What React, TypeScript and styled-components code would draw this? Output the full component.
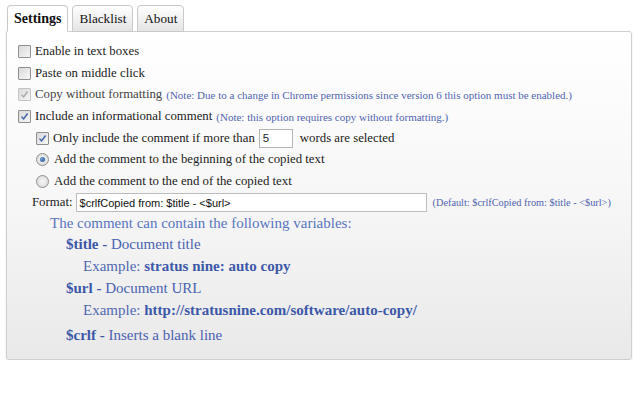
import styled, { createGlobalStyle } from "styled-components";

const GlobalStyle = createGlobalStyle`
  html, body {
    margin: 0;
    padding: 0;
    background: #ffffff;
  }
  body {
    font-family: "Liberation Serif", "Times New Roman", serif;
    color: #222;
  }
`;

const Page = styled.div`
  padding: 5px 8px 0 6px;
  width: 640px;
  box-sizing: border-box;
`;

const TabBar = styled.div`
  display: flex;
  gap: 4px;
  padding-left: 1px;
  position: relative;
  z-index: 2;
  margin-bottom: -1px;
`;

const Tab = styled.div<{ $active?: boolean }>`
  height: 25px;
  padding: 0 6px;
  display: flex;
  align-items: center;
  font-size: ${({ $active }) => ($active ? "14px" : "13.2px")};
  font-weight: ${({ $active }) => ($active ? "bold" : "normal")};
  color: #111;
  border: 1px solid #c9c9c9;
  border-bottom-color: ${({ $active }) => ($active ? "#fff" : "#c9c9c9")};
  border-radius: 4px 4px 0 0;
  background: ${({ $active }) =>
    $active ? "#fff" : "linear-gradient(#ffffff, #e4e4e4)"};
`;

const Panel = styled.div`
  border: 1px solid #cfcfcf;
  border-radius: 0 3px 3px 3px;
  background: linear-gradient(#ffffff 0%, #f7f7f7 50%, #e9e9e9 100%);
  box-shadow: 0 1px 2px rgba(0, 0, 0, 0.12);
  height: 329px;
  box-sizing: border-box;
  padding: 9px 0 0 11px;
`;

const Row = styled.div<{ $indent?: number }>`
  display: flex;
  align-items: center;
  height: 21.6px;
  font-size: 12.8px;
  padding-left: ${({ $indent }) => ($indent ?? 0) * 18}px;
  white-space: nowrap;
`;

const Box = styled.span<{ $faded?: boolean }>`
  width: 11px;
  height: 11px;
  border: 1px solid ${({ $faded }) => ($faded ? "#c4c4c4" : "#8f8f8f")};
  border-radius: 1px;
  background: linear-gradient(135deg, #d9d9d9, #f6f6f6);
  margin-right: 4px;
  display: flex;
  align-items: center;
  justify-content: center;
  flex-shrink: 0;
`;

const Radio = styled.span<{ $on?: boolean }>`
  width: 11px;
  height: 11px;
  border: 1px solid #8f8f8f;
  border-radius: 50%;
  background: radial-gradient(#f8f8f8, #d4d4d4);
  margin-right: 5px;
  display: flex;
  align-items: center;
  justify-content: center;
  flex-shrink: 0;
  &::after {
    content: "";
    display: ${({ $on }) => ($on ? "block" : "none")};
    width: 5px;
    height: 5px;
    border-radius: 50%;
    background: radial-gradient(circle at 35% 35%, #6fa0d8, #1d4f8f);
  }
`;

const Note = styled.span<{ $gap?: number; $size?: number }>`
  margin-left: ${({ $gap }) => $gap ?? 4}px;
  font-size: ${({ $size }) => $size ?? 11}px;
  color: #5064b0;
  white-space: nowrap;
`;

const NumInput = styled.span`
  width: 34px;
  height: 19px;
  border: 1px solid #b5b5b5;
  background: #fff;
  margin: 0 7px 0 4px;
  font-family: "Liberation Sans", Arial, sans-serif;
  font-size: 11.5px;
  display: flex;
  align-items: center;
  padding-left: 3px;
  box-sizing: border-box;
`;

const FormatRow = styled.div`
  display: flex;
  align-items: center;
  height: 21.6px;
  padding-left: 14px;
  font-size: 12.8px;
  white-space: nowrap;
`;

const TextField = styled.span`
  width: 351px;
  height: 19px;
  margin-left: 3px;
  border: 1px solid #bdbdbd;
  background: #fff;
  box-sizing: border-box;
  font-family: "Liberation Sans", Arial, sans-serif;
  font-size: 11px;
  display: flex;
  align-items: center;
  padding-left: 3px;
  color: #111;
`;

const Help = styled.div`
  padding-left: 32px;
  margin-top: -1px;
  color: #4f6ab4;
`;

const HelpTitle = styled.div`
  font-size: 15px;
  height: 21px;
  line-height: 21px;
  color: #5975bf;
`;

const VarBlock = styled.div`
  padding-left: 16px;
`;

const VarLine = styled.div`
  font-size: 15px;
  height: 21px;
  line-height: 21px;
  color: #4a62b0;
`;

const VarName = styled.b`
  color: #3c58a8;
`;

const Example = styled.div<{ $after?: number }>`
  padding-left: 17px;
  font-size: 15px;
  height: 22px;
  line-height: 22px;
  margin-bottom: ${({ $after }) => $after ?? 1}px;
  color: #5068b3;
  b {
    color: #3c58a8;
  }
`;

const Check = ({ faded }: { faded?: boolean }) => (
  <svg width="9" height="9" viewBox="0 0 9 9">
    <path
      d="M1.5 4.6 L3.6 7 L7.6 1.5"
      fill="none"
      stroke={faded ? "#a8a8a8" : "#3a5ea8"}
      strokeWidth="1.4"
    />
  </svg>
);

export default function App() {
  return (
    <Page>
      <GlobalStyle />
      <TabBar>
        <Tab $active>Settings</Tab>
        <Tab>Blacklist</Tab>
        <Tab>About</Tab>
      </TabBar>
      <Panel>
        <Row>
          <Box />
          Enable in text boxes
        </Row>
        <Row>
          <Box />
          Paste on middle click
        </Row>
        <Row style={{ color: "#444" }}>
          <Box $faded>
            <Check faded />
          </Box>
          Copy without formatting
          <Note>
            (Note: Due to a change in Chrome permissions since version 6 this
            option must be enabled.)
          </Note>
        </Row>
        <Row>
          <Box>
            <Check />
          </Box>
          Include an informational comment
          <Note>(Note: this option requires copy without formatting.)</Note>
        </Row>
        <Row $indent={1}>
          <Box>
            <Check />
          </Box>
          Only include the comment if more than
          <NumInput>5</NumInput>
          words are selected
        </Row>
        <Row $indent={1}>
          <Radio $on />
          Add the comment to the beginning of the copied text
        </Row>
        <Row $indent={1}>
          <Radio />
          Add the comment to the end of the copied text
        </Row>
        <FormatRow>
          Format:
          <TextField>$crlfCopied from: $title - &lt;$url&gt;</TextField>
          <Note $gap={6} $size={10.3}>
            (Default: $crlfCopied from: $title - &lt;$url&gt;)
          </Note>
        </FormatRow>
        <Help>
          <HelpTitle>The comment can contain the following variables:</HelpTitle>
          <VarBlock>
            <VarLine>
              <VarName>$title -</VarName> Document title
            </VarLine>
            <Example>
              Example: <b>stratus nine: auto copy</b>
            </Example>
            <VarLine>
              <VarName>$url -</VarName> Document URL
            </VarLine>
            <Example $after={4}>
              Example: <b>http://stratusnine.com/software/auto-copy/</b>
            </Example>
            <VarLine>
              <VarName>$crlf -</VarName> Inserts a blank line
            </VarLine>
          </VarBlock>
        </Help>
      </Panel>
    </Page>
  );
}
